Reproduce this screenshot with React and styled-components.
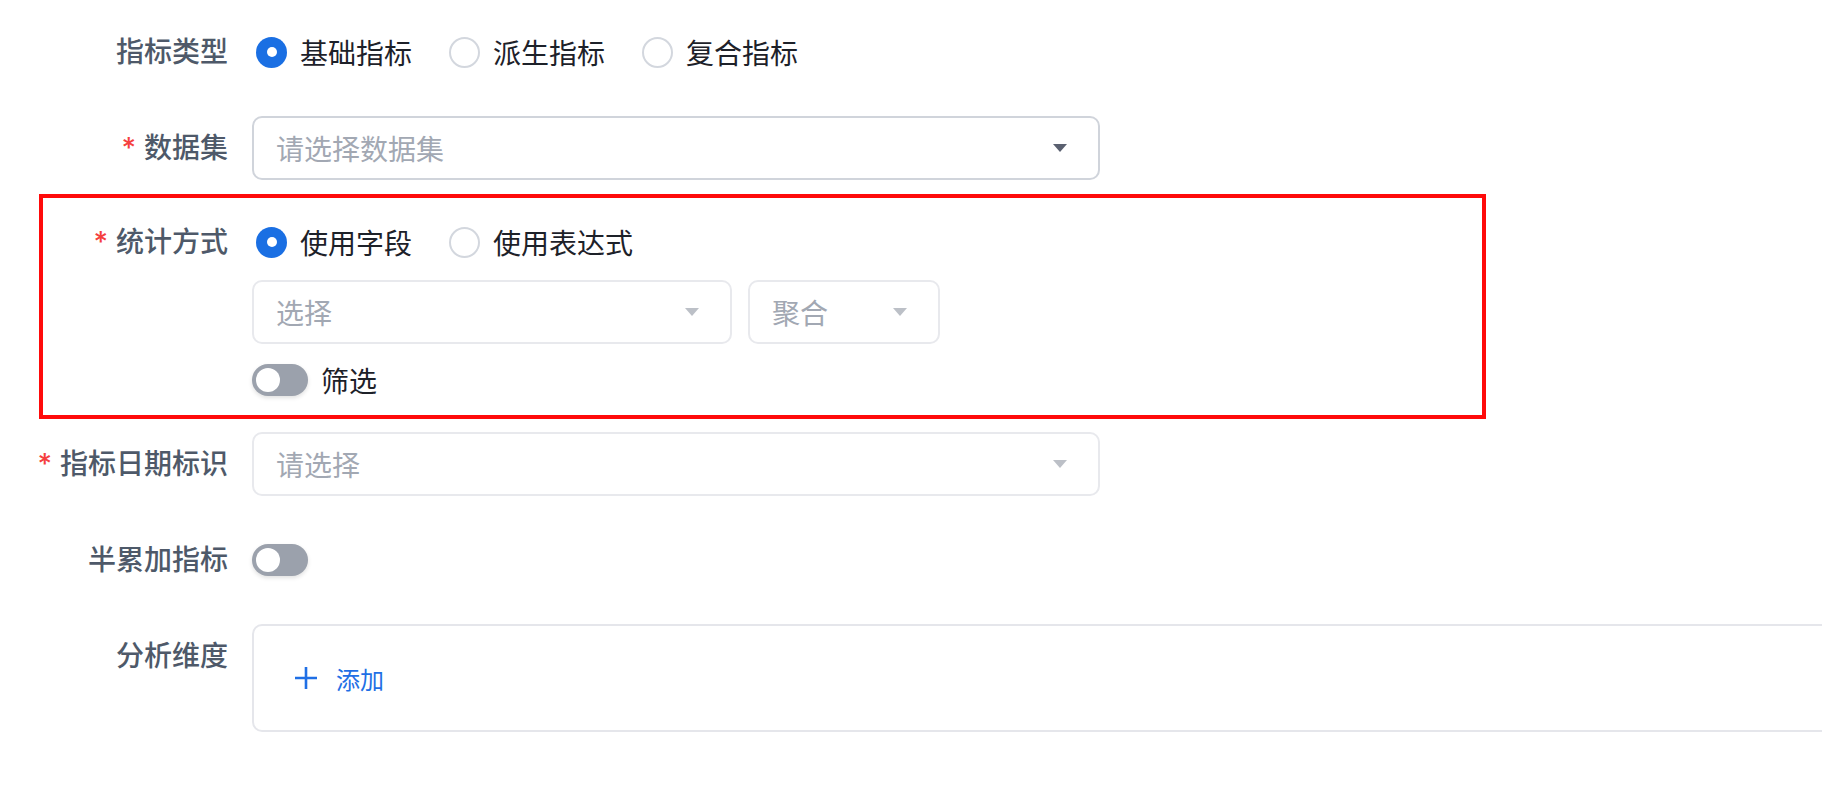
import React from "react";
import styled, { createGlobalStyle } from "styled-components";

const GlobalStyle = createGlobalStyle`
  html, body {
    margin: 0;
    padding: 0;
    background: #ffffff;
    overflow: hidden;
  }
  body {
    font-family: "Inter", "Noto Sans CJK SC", sans-serif;
  }
`;

export default function App() {
  return (
    <>
      <GlobalStyle />
      <Page>
        <FormItem>
          <Label $width={228}>指标类型</Label>
          <Control>
            <RadioGroup>
              <RadioOption>
                <RadioDot $checked />
                基础指标
              </RadioOption>
              <RadioOption>
                <RadioDot />
                派生指标
              </RadioOption>
              <RadioOption>
                <RadioDot />
                复合指标
              </RadioOption>
            </RadioGroup>
          </Control>
        </FormItem>

        <FormItem $mb={14}>
          <Label $width={228}>
            <Required>*</Required>数据集
          </Label>
          <Control>
            <Select $width={848} $active>
              <span>请选择数据集</span>
              <Caret $active />
            </Select>
          </Control>
        </FormItem>

        <Highlight>
          <FormItem $mb={0}>
            <Label $width={185}>
              <Required>*</Required>统计方式
            </Label>
            <Control>
              <RadioGroup>
                <RadioOption>
                  <RadioDot $checked />
                  使用字段
                </RadioOption>
                <RadioOption>
                  <RadioDot />
                  使用表达式
                </RadioOption>
              </RadioGroup>
              <SelectRow>
                <Select $width={480}>
                  <span>选择</span>
                  <Caret />
                </Select>
                <Select $width={192}>
                  <span>聚合</span>
                  <Caret />
                </Select>
              </SelectRow>
              <SwitchRow>
                <Switch />
                <SwitchText>筛选</SwitchText>
              </SwitchRow>
            </Control>
          </FormItem>
        </Highlight>

        <FormItem>
          <Label $width={228}>
            <Required>*</Required>指标日期标识
          </Label>
          <Control>
            <Select $width={848}>
              <span>请选择</span>
              <Caret />
            </Select>
          </Control>
        </FormItem>

        <FormItem>
          <Label $width={228}>半累加指标</Label>
          <Control $center>
            <Switch />
          </Control>
        </FormItem>

        <FormItem>
          <Label $width={228}>分析维度</Label>
          <Control>
            <DimensionBox>
              <AddButton>
                <svg width="24" height="24" viewBox="0 0 24 24">
                  <path d="M12 1v22M1 12h22" stroke="#1f6fe5" strokeWidth="2.6" fill="none" />
                </svg>
                添加
              </AddButton>
            </DimensionBox>
          </Control>
        </FormItem>
      </Page>
    </>
  );
}

function Caret({ $active }) {
  return (
    <CaretIcon width="14" height="8" viewBox="0 0 14 8" $active={$active}>
      <path d="M0 0h14L7 8z" />
    </CaretIcon>
  );
}

const Page = styled.div`
  width: 100%;
  padding-top: 20px;
  overflow: hidden;
`;

const FormItem = styled.div`
  display: flex;
  align-items: flex-start;
  margin-bottom: ${(p) => (p.$mb ?? 32)}px;
`;

const Label = styled.div`
  width: ${(p) => p.$width}px;
  flex-shrink: 0;
  height: 64px;
  line-height: 64px;
  text-align: right;
  font-size: 28px;
  font-weight: 500;
  color: #4e5969;
  white-space: nowrap;
`;

const Required = styled.span`
  color: #f53f3f;
  margin-right: 8px;
`;

const Control = styled.div`
  margin-left: 24px;
  display: flex;
  flex-direction: column;
  min-height: 64px;
  justify-content: ${(p) => (p.$center ? "center" : "flex-start")};
`;

const RadioGroup = styled.div`
  display: flex;
  align-items: center;
  height: 64px;
  gap: 37px;
  padding-left: 4px;
`;

const RadioOption = styled.label`
  display: flex;
  align-items: center;
  gap: 13px;
  font-size: 28px;
  color: #1d2129;
  white-space: nowrap;
`;

const RadioDot = styled.span`
  position: relative;
  width: 31px;
  height: 31px;
  border-radius: 50%;
  box-sizing: border-box;
  flex-shrink: 0;
  background: ${(p) => (p.$checked ? "#1a6fe3" : "#ffffff")};
  border: ${(p) => (p.$checked ? "none" : "2px solid #d3d7de")};
  &::after {
    content: "";
    display: ${(p) => (p.$checked ? "block" : "none")};
    position: absolute;
    left: 50%;
    top: 50%;
    width: 10px;
    height: 10px;
    margin: -5px 0 0 -5px;
    border-radius: 50%;
    background: #ffffff;
  }
`;

const Select = styled.div`
  width: ${(p) => p.$width}px;
  height: 64px;
  box-sizing: border-box;
  border: 2px solid ${(p) => (p.$active ? "#d0d4db" : "#e8e9ed")};
  border-radius: 10px;
  display: flex;
  align-items: center;
  justify-content: space-between;
  padding: 0 31px 0 22px;
  font-size: 28px;
  color: #a2a8b3;
  background: #ffffff;
`;

const CaretIcon = styled.svg`
  flex-shrink: 0;
  fill: ${(p) => (p.$active ? "#5a6070" : "#bcc0c7")};
`;

const SelectRow = styled.div`
  display: flex;
  gap: 16px;
  margin-top: 6px;
`;

const SwitchRow = styled.div`
  display: flex;
  align-items: center;
  gap: 13px;
  height: 32px;
  margin-top: 20px;
`;

const SwitchText = styled.span`
  font-size: 28px;
  color: #1d2129;
`;

const Switch = styled.span`
  position: relative;
  display: inline-block;
  width: 56px;
  height: 32px;
  border-radius: 16px;
  background: #9ba1ac;
  box-shadow: 0 2px 4px rgba(0, 0, 0, 0.12);
  &::after {
    content: "";
    position: absolute;
    left: 4px;
    top: 4px;
    width: 24px;
    height: 24px;
    border-radius: 50%;
    background: #ffffff;
  }
`;

const Highlight = styled.div`
  margin: 0 0 13px 39px;
  width: 1447px;
  box-sizing: border-box;
  border: 4px solid #ff0a0a;
  padding: 12px 0 19px 0;
`;

const DimensionBox = styled.div`
  width: 1700px;
  height: 108px;
  box-sizing: border-box;
  border: 2px solid #e5e6eb;
  border-radius: 10px;
  display: flex;
  align-items: center;
  padding-left: 40px;
`;

const AddButton = styled.div`
  display: flex;
  align-items: center;
  gap: 18px;
  font-size: 24px;
  color: #1f6fe5;
`;
